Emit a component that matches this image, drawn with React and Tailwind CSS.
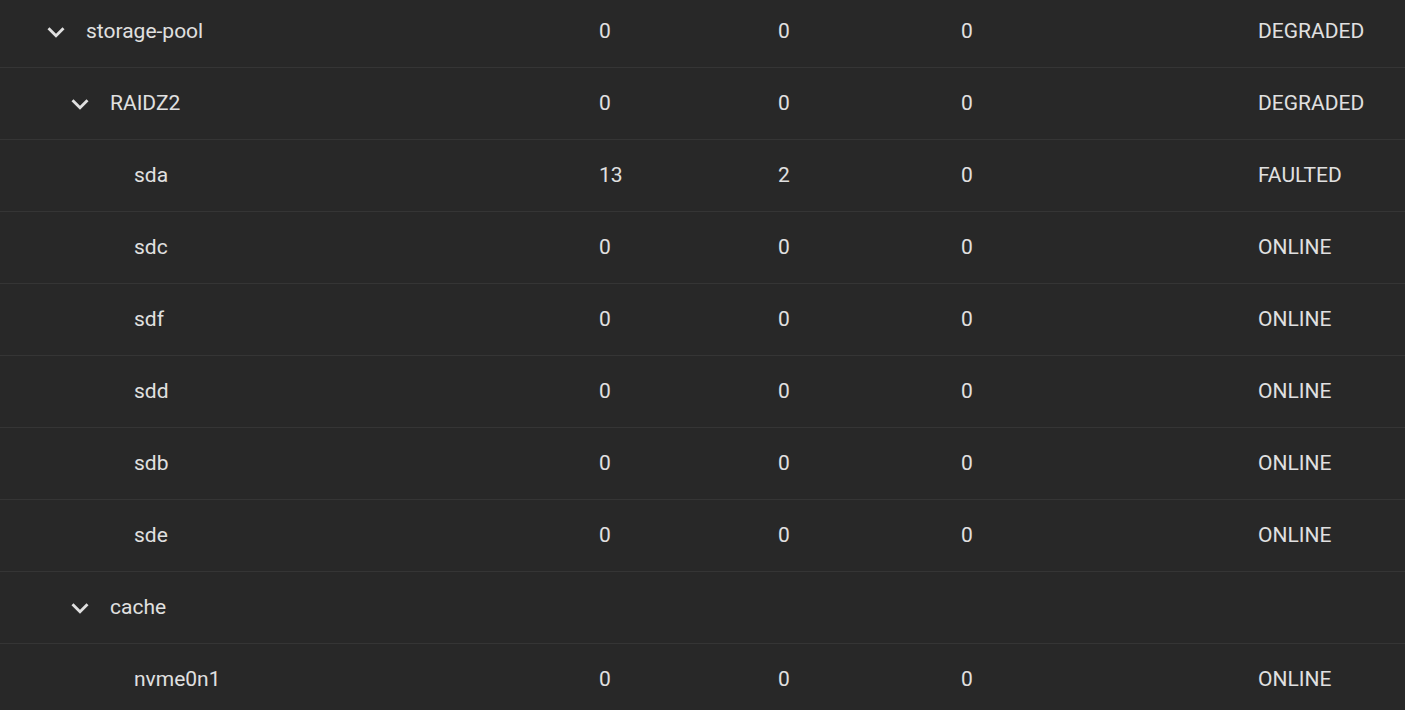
const rows = [
	{ name: "storage-pool", level: 0, group: true, r: "0", w: "0", c: "0", status: "DEGRADED" },
	{ name: "RAIDZ2", level: 1, group: true, r: "0", w: "0", c: "0", status: "DEGRADED" },
	{ name: "sda", level: 2, r: "13", w: "2", c: "0", status: "FAULTED" },
	{ name: "sdc", level: 2, r: "0", w: "0", c: "0", status: "ONLINE" },
	{ name: "sdf", level: 2, r: "0", w: "0", c: "0", status: "ONLINE" },
	{ name: "sdd", level: 2, r: "0", w: "0", c: "0", status: "ONLINE" },
	{ name: "sdb", level: 2, r: "0", w: "0", c: "0", status: "ONLINE" },
	{ name: "sde", level: 2, r: "0", w: "0", c: "0", status: "ONLINE" },
	{ name: "cache", level: 1, group: true, r: "", w: "", c: "", status: "" },
	{ name: "nvme0n1", level: 2, r: "0", w: "0", c: "0", status: "ONLINE" },
];

const indent = ["pl-[40px]", "pl-[64px]", "pl-[88px]"];

function Chevron() {
	return (
		<svg viewBox="0 0 24 24" className="h-[34px] w-[34px] shrink-0 fill-[#e0e0e0]">
			<path d="M16.59 8.59 12 13.17 7.41 8.59 6 10l6 6 6-6z" />
		</svg>
	);
}

export default function App() {
	return (
		<div
			className="h-[710px] w-full overflow-hidden bg-[#282828] text-[21px] text-[#e0e0e0]"
			style={{ fontFamily: "Roboto, 'Liberation Sans', sans-serif" }}
		>
			<div className="-mt-[4px]">
				{rows.map((row) => (
					<div
						key={row.name}
						className="grid h-[72px] grid-cols-[599px_179px_183px_297px_1fr] items-center border-b border-[#353535] pt-[1px]"
					>
						<div className={`flex items-center ${indent[row.level]}`}>
							{row.group ? (
								<span className="flex w-[32px] justify-center">
									<Chevron />
								</span>
							) : (
								<span className="w-[32px]" />
							)}
							<span className="ml-[14px]">{row.name}</span>
						</div>
						<div>{row.r}</div>
						<div>{row.w}</div>
						<div>{row.c}</div>
						<div>{row.status}</div>
					</div>
				))}
			</div>
		</div>
	);
}
